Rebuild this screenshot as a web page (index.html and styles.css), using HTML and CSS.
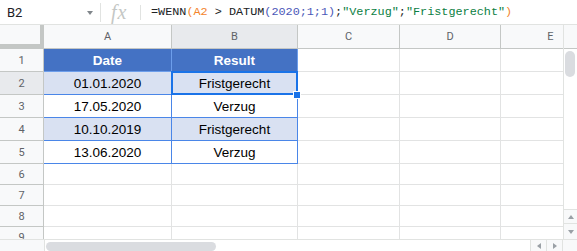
FILE: index.html
```html
<!DOCTYPE html>
<html lang="de">
<head>
    <meta charset="UTF-8">
    <title>WENN DATUM</title>
    <link rel="stylesheet" href="styles.css">
</head>
<body>
    <!-- Formula bar -->
    <div class="formula-bar">
        <div class="name-box">
            <span class="name">B2</span>
            <span class="caret"></span>
        </div>
        <div class="fx">fx</div>
        <div class="formula">=WENN<span class="paren1">(</span><span class="ref">A2</span> &gt; DATUM<span class="num">(2020;1;1)</span>;<span class="str">"Verzug"</span>;<span class="str">"Fristgerecht"</span><span class="paren1">)</span></div>
    </div>

    <div class="sheet">
        <div class="grid">
            <div class="row head-row">
                <div class="corner"></div>
                <div class="col-head">A</div>
                <div class="col-head active">B</div>
                <div class="col-head">C</div>
                <div class="col-head">D</div>
                <div class="col-head">E</div>
            </div>
            <div class="row tall">
                <div class="row-head">1</div>
                <div class="cell t-head">Date</div>
                <div class="cell t-head">Result</div>
                <div class="cell"></div><div class="cell"></div><div class="cell"></div>
            </div>
            <div class="row tall">
                <div class="row-head active">2</div>
                <div class="cell t-cell band">01.01.2020</div>
                <div class="cell t-cell band selected">Fristgerecht<span class="handle"></span></div>
                <div class="cell"></div><div class="cell"></div><div class="cell"></div>
            </div>
            <div class="row tall">
                <div class="row-head">3</div>
                <div class="cell t-cell">17.05.2020</div>
                <div class="cell t-cell">Verzug</div>
                <div class="cell"></div><div class="cell"></div><div class="cell"></div>
            </div>
            <div class="row tall">
                <div class="row-head">4</div>
                <div class="cell t-cell band">10.10.2019</div>
                <div class="cell t-cell band">Fristgerecht</div>
                <div class="cell"></div><div class="cell"></div><div class="cell"></div>
            </div>
            <div class="row tall">
                <div class="row-head">5</div>
                <div class="cell t-cell">13.06.2020</div>
                <div class="cell t-cell">Verzug</div>
                <div class="cell"></div><div class="cell"></div><div class="cell"></div>
            </div>
            <div class="row">
                <div class="row-head">6</div>
                <div class="cell"></div><div class="cell"></div><div class="cell"></div><div class="cell"></div><div class="cell"></div>
            </div>
            <div class="row">
                <div class="row-head">7</div>
                <div class="cell"></div><div class="cell"></div><div class="cell"></div><div class="cell"></div><div class="cell"></div>
            </div>
            <div class="row">
                <div class="row-head">8</div>
                <div class="cell"></div><div class="cell"></div><div class="cell"></div><div class="cell"></div><div class="cell"></div>
            </div>
            <div class="row">
                <div class="row-head">9</div>
                <div class="cell"></div><div class="cell"></div><div class="cell"></div><div class="cell"></div><div class="cell"></div>
            </div>
        </div>

        <!-- Vertical scrollbar -->
        <div class="vscroll">
            <div class="vscroll-head"></div>
            <div class="vscroll-track">
                <div class="vthumb"></div>
            </div>
            <div class="vbtn"><span class="tri up"></span></div>
            <div class="vbtn last"><span class="tri down"></span></div>
        </div>
    </div>

    <!-- Horizontal scrollbar -->
    <div class="hscroll">
        <div class="hscroll-head"></div>
        <div class="hscroll-track">
            <div class="hthumb"></div>
        </div>
        <div class="hbtn"><span class="tri left"></span></div>
        <div class="hbtn"><span class="tri right"></span></div>
        <div class="hcorner"></div>
    </div>
</body>
</html>
```

FILE: styles.css
```css
body {
    margin: 0;
    width: 577px;
    height: 251px;
    overflow: hidden;
    background: #fff;
    font-family: Roboto, Arial, sans-serif;
}

/* Formula bar */
.formula-bar {
    display: flex;
    align-items: center;
    height: 25px;
    box-sizing: border-box;
    border-bottom: 1px solid #e1e3e1;
}

.name-box {
    display: flex;
    align-items: center;
    justify-content: space-between;
    width: 101px;
    height: 19px;
    box-sizing: border-box;
    padding: 0 7px 0 7px;
    border-right: 1px solid #e1e3e1;
}

.name {
    font-size: 13px;
    color: #202124;
}

.caret {
    width: 0;
    height: 0;
    border-left: 3.5px solid transparent;
    border-right: 3.5px solid transparent;
    border-top: 4px solid #80868b;
    margin-top: 2px;
}

.fx {
    width: 40px;
    height: 15px;
    line-height: 15px;
    box-sizing: border-box;
    padding-left: 10px;
    border-right: 1px solid #e1e3e1;
    font-family: "Liberation Serif", serif;
    font-style: italic;
    font-size: 20px;
    color: #c4c7c5;
    letter-spacing: 1px;
}

.formula {
    padding-left: 10px;
    font-family: "Liberation Mono", monospace;
    font-size: 11.8px;
    color: #202124;
    white-space: pre;
}

.formula .ref,
.formula .paren1 {
    color: #f4852b;
}

.formula .num {
    color: #4a58b8;
}

.formula .str {
    color: #0b8043;
}

/* Sheet */
.sheet {
    display: flex;
    height: 214px;
}

.grid {
    width: 563px;
    overflow: hidden;
}

.row {
    display: grid;
    grid-template-columns: 44px 128px 126px 102px 101px 100px;
    height: 21px;
}

.row.tall {
    height: 23px;
}

.row.head-row {
    height: 24px;
}

.row > div {
    box-sizing: border-box;
    display: flex;
    align-items: center;
    justify-content: center;
}

.corner {
    background: #f8f9fa;
    border-right: 4px solid #c4c7c5;
    border-bottom: 5px solid #c4c7c5;
}

.col-head {
    background: #f8f9fa;
    border-right: 1px solid #c4c7c5;
    border-bottom: 1px solid #c4c7c5;
    font-size: 11px;
    color: #5f6368;
}

.row-head {
    background: #f8f9fa;
    border-right: 1px solid #c4c7c5;
    border-bottom: 1px solid #c4c7c5;
    font-size: 11px;
    color: #5f6368;
}

.col-head.active,
.row-head.active {
    background: #e8eaed;
}

.cell {
    border-right: 1px solid #e2e3e3;
    border-bottom: 1px solid #e2e3e3;
    font-family: "Liberation Sans", Arial, sans-serif;
    font-size: 13.5px;
    color: #000;
}

.t-head {
    background: #4472c4;
    color: #fff;
    font-weight: bold;
    border-color: #6d9eeb;
}

.t-cell {
    border-color: #4a86e8;
}

.band {
    background: #d9e1f2;
}

.selected {
    position: relative;
}

.selected::after {
    content: "";
    position: absolute;
    left: -1px;
    top: -1px;
    right: -1px;
    bottom: -1px;
    border: 2px solid #1a73e8;
}

.handle {
    position: absolute;
    right: -4px;
    bottom: -5px;
    width: 6px;
    height: 6px;
    background: #1a73e8;
    border: 1px solid #fff;
    z-index: 2;
}

/* Scrollbars */
.vscroll {
    display: flex;
    flex-direction: column;
    width: 14px;
    border-left: 1px solid #e1e3e1;
    box-sizing: border-box;
}

.vscroll-head {
    height: 24px;
    box-sizing: border-box;
    background: #f8f9fa;
    border-bottom: 1px solid #c4c7c5;
}

.vscroll-track {
    flex: 1;
    padding: 2px 2px 0 1px;
}

.vthumb {
    height: 26px;
    background: #dadce0;
    border-radius: 5px;
}

.vbtn {
    display: flex;
    align-items: center;
    justify-content: center;
    height: 13px;
    border-top: 1px solid #e1e3e1;
    background: #f8f9fa;
}

.vbtn.last {
    height: 15px;
}

.hscroll {
    display: flex;
    height: 12px;
    border-top: 1px solid #e1e3e1;
}

.hscroll-head {
    width: 44px;
    background: #f8f9fa;
    border-right: 1px solid #e1e3e1;
}

.hscroll-track {
    flex: 1;
    padding: 2px 0 0 1px;
}

.hthumb {
    width: 170px;
    height: 9px;
    background: #dadce0;
    border-radius: 5px;
}

.hbtn {
    display: flex;
    align-items: center;
    justify-content: center;
    width: 15px;
    border-left: 1px solid #e1e3e1;
    background: #f8f9fa;
}

.hcorner {
    width: 14px;
    border-left: 1px solid #e1e3e1;
    background: #f8f9fa;
}

.tri {
    width: 0;
    height: 0;
}

.tri.up {
    border-left: 3px solid transparent;
    border-right: 3px solid transparent;
    border-bottom: 4px solid #9aa0a6;
}

.tri.down {
    border-left: 3px solid transparent;
    border-right: 3px solid transparent;
    border-top: 4px solid #9aa0a6;
}

.tri.left {
    border-top: 3px solid transparent;
    border-bottom: 3px solid transparent;
    border-right: 4px solid #9aa0a6;
}

.tri.right {
    border-top: 3px solid transparent;
    border-bottom: 3px solid transparent;
    border-left: 4px solid #9aa0a6;
}
```
